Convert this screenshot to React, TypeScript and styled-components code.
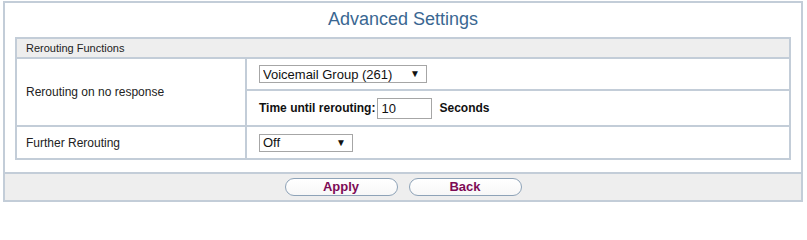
import React from 'react'
import styled, { createGlobalStyle } from 'styled-components'

const GlobalStyle = createGlobalStyle`
    html, body {
        margin: 0;
        padding: 0;
        background: #fff;
    }
    body {
        font-family: "Liberation Sans", Arial, sans-serif;
        color: #222;
    }
`

const borderColor = '#c3cdd8'

const Panel = styled.div`
    box-sizing: border-box;
    width: 800px;
    margin: 1px 0 0 3px;
    border: 2px solid ${borderColor};
    background: #fff;
`

const Title = styled.h1`
    margin: 0;
    height: 34px;
    line-height: 32px;
    text-align: center;
    font-size: 18px;
    font-weight: normal;
    color: #3a6792;
`

const Table = styled.div`
    margin: 0 10px;
    border: 2px solid ${borderColor};
`

const SectionHeader = styled.div`
    height: 18px;
    line-height: 18px;
    padding-left: 9px;
    font-size: 11px;
    background: #eeeeee;
    border-bottom: 2px solid ${borderColor};
`

const Body = styled.div`
    display: grid;
    grid-template-columns: 230px 1fr;
    grid-template-rows: 32px 36px 31px;
`

const LabelCell = styled.div<{ $span?: number; $last?: boolean }>`
    box-sizing: border-box;
    grid-row: span ${p => p.$span ?? 1};
    display: flex;
    align-items: center;
    padding-left: 9px;
    font-size: 12px;
    border-right: 2px solid ${borderColor};
    border-bottom: ${p => (p.$last ? 'none' : `2px solid ${borderColor}`)};
`

const ValueCell = styled.div<{ $last?: boolean }>`
    box-sizing: border-box;
    display: flex;
    align-items: center;
    gap: 5px;
    padding-left: 12px;
    font-size: 12px;
    border-bottom: ${p => (p.$last ? 'none' : `2px solid ${borderColor}`)};
`

const SelectWrap = styled.div<{ $width: number }>`
    position: relative;
    width: ${p => p.$width}px;
    height: 18px;
`

const Select = styled.select`
    appearance: none;
    box-sizing: border-box;
    width: 100%;
    height: 100%;
    margin: 0;
    padding: 0 0 0 3px;
    border: 1px solid #a6a6a6;
    border-radius: 0;
    background: #fff;
    font-family: inherit;
    font-size: 13px;
    color: #111;
    outline: none;
`

const Arrow = styled.span`
    position: absolute;
    right: 7px;
    top: 3px;
    font-size: 10px;
    line-height: 11px;
    color: #111;
    pointer-events: none;
`

const Strong = styled.span`
    font-weight: bold;
    color: #111;
`

const NumberInput = styled.input`
    box-sizing: border-box;
    width: 55px;
    height: 21px;
    margin: 0 2px 0 -3px;
    padding: 0 3px;
    border: 1px solid #a6a6a6;
    font-family: inherit;
    font-size: 13px;
    color: #111;
    outline: none;
`

const Footer = styled.div`
    margin-top: 12px;
    height: 26px;
    border-top: 2px solid ${borderColor};
    background: #eeeeee;
    display: flex;
    justify-content: center;
    align-items: center;
    gap: 11px;
`

const Button = styled.button`
    box-sizing: border-box;
    width: 113px;
    height: 18px;
    padding: 0;
    border: 1px solid #8ea3b8;
    border-radius: 9px;
    background: linear-gradient(#ffffff, #f7f7f7);
    font-family: inherit;
    font-size: 13px;
    font-weight: bold;
    line-height: 16px;
    color: #7d0a55;
    cursor: pointer;
`

interface DropdownProps {
    width: number
    value: string
    options: string[]
}

const Dropdown: React.FC<DropdownProps> = ({ width, value, options }) => (
    <SelectWrap $width={width}>
        <Select defaultValue={value}>
            {options.map(opt => <option key={opt}>{opt}</option>)}
        </Select>
        <Arrow>▼</Arrow>
    </SelectWrap>
)

export default function App() {
    return (
        <>
            <GlobalStyle />
            <Panel>
                <Title>Advanced Settings</Title>
                <Table>
                    <SectionHeader>Rerouting Functions</SectionHeader>
                    <Body>
                        <LabelCell $span={2}>Rerouting on no response</LabelCell>
                        <ValueCell>
                            <Dropdown width={168} value="Voicemail Group (261)" options={['Off', 'Voicemail Group (261)']} />
                        </ValueCell>
                        <ValueCell>
                            <Strong>Time until rerouting:</Strong>
                            <NumberInput type="text" defaultValue="10" />
                            <Strong>Seconds</Strong>
                        </ValueCell>
                        <LabelCell $last>Further Rerouting</LabelCell>
                        <ValueCell $last>
                            <Dropdown width={94} value="Off" options={['Off', 'On']} />
                        </ValueCell>
                    </Body>
                </Table>
                <Footer>
                    <Button>Apply</Button>
                    <Button>Back</Button>
                </Footer>
            </Panel>
        </>
    )
}
